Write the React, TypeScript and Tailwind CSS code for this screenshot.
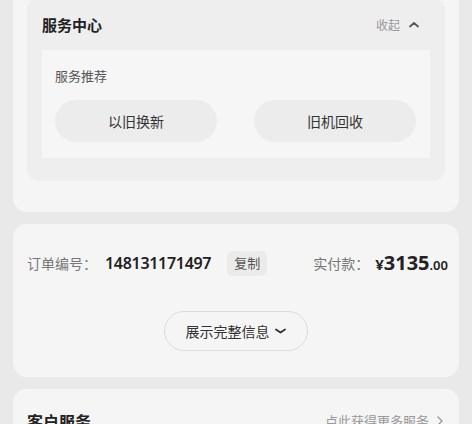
import React from 'react'

const font = { fontFamily: '"Noto Sans CJK SC", "Noto Sans", sans-serif' }

function ChevronUp() {
  return (
    <svg width="12" height="12" viewBox="0 0 12 12" fill="none">
      <path d="M2 7.5 L6 4 L10 7.5" stroke="#555" strokeWidth="1.8" strokeLinecap="round" strokeLinejoin="round" />
    </svg>
  )
}

function ChevronDown() {
  return (
    <svg width="13" height="12" viewBox="0 0 13 12" fill="none">
      <path d="M2 4.5 L6.5 7.5 L11 4.5" stroke="#333" strokeWidth="1.8" strokeLinecap="round" strokeLinejoin="round" />
    </svg>
  )
}

function ChevronRight() {
  return (
    <svg width="10" height="12" viewBox="0 0 10 12" fill="none">
      <path d="M3 2 L7 6 L3 10" stroke="#999" strokeWidth="1.4" strokeLinecap="round" strokeLinejoin="round" />
    </svg>
  )
}

export default function App() {
  return (
    <div className="w-[472px] h-[424px] overflow-hidden bg-[#e9e9e9]" style={font}>
      <div className="flex flex-col gap-[12px] px-[13px] -mt-[16px]">
        {/* service center card */}
        <div className="rounded-[14px] bg-[#f5f5f5] px-[14px] pt-[14px] pb-[31px]">
          <div className="rounded-[12px] bg-[#eeeeee] px-[15px] pb-[23px]">
            <div className="flex items-center justify-between h-[52px] pt-[2px] pr-[10px]">
              <span className="text-[15px] font-bold text-[#222]">服务中心</span>
              <span className="flex items-center gap-[8px] text-[12px] text-[#999]">
                收起
                <ChevronUp />
              </span>
            </div>
            <div className="bg-[#f6f6f6] px-[13px] pr-[14px] pt-[16px] pb-[16px]">
              <div className="text-[13px] leading-[20px] text-[#555]">服务推荐</div>
              <div className="grid grid-cols-2 gap-[37px] mt-[14px]">
                <div className="h-[42px] rounded-full bg-[#ececec] flex items-center justify-center text-[14px] text-[#333]">
                  以旧换新
                </div>
                <div className="h-[42px] rounded-full bg-[#ececec] flex items-center justify-center text-[14px] text-[#333]">
                  旧机回收
                </div>
              </div>
            </div>
          </div>
        </div>

        {/* order card */}
        <div className="rounded-[14px] bg-[#f5f5f5] h-[153px] px-[14px] pt-[26px]">
          <div className="flex items-center h-[26px] -mr-[3px]">
            <span className="text-[14px] text-[#777]">订单编号：</span>
            <span className="ml-[8px] text-[16px] font-semibold text-[#222] tracking-[-0.3px]" style={{ fontFamily: '"Noto Sans", sans-serif' }}>
              148131171497
            </span>
            <span className="ml-[16px] h-[25px] px-[7px] rounded-[6px] bg-[#ebebeb] flex items-center text-[13px] text-[#555]">复制</span>
            <span className="ml-auto text-[14px] text-[#777]">实付款：</span>
            <span className="ml-[6px] flex items-baseline text-[#222] font-bold" style={{ fontFamily: '"Noto Sans", sans-serif' }}>
              <span className="text-[15px]">¥</span>
              <span className="text-[20px]">3135</span>
              <span className="text-[13px] font-semibold">.00</span>
            </span>
          </div>
          <div className="flex justify-center mt-[35px]">
            <div className="h-[40px] w-[144px] rounded-full border border-[#dcdcdc] flex items-center justify-center gap-[4px] text-[14px] text-[#333]">
              展示完整信息
              <ChevronDown />
            </div>
          </div>
        </div>

        {/* customer service card */}
        <div className="rounded-[14px] bg-[#f5f5f5] h-[80px] px-[14px] pt-[20px]">
          <div className="flex items-center justify-between">
            <span className="text-[16px] font-bold text-[#222]">客户服务</span>
            <span className="flex items-center gap-[6px] text-[13px] text-[#999]">
              点此获得更多服务
              <ChevronRight />
            </span>
          </div>
        </div>
      </div>
    </div>
  )
}
